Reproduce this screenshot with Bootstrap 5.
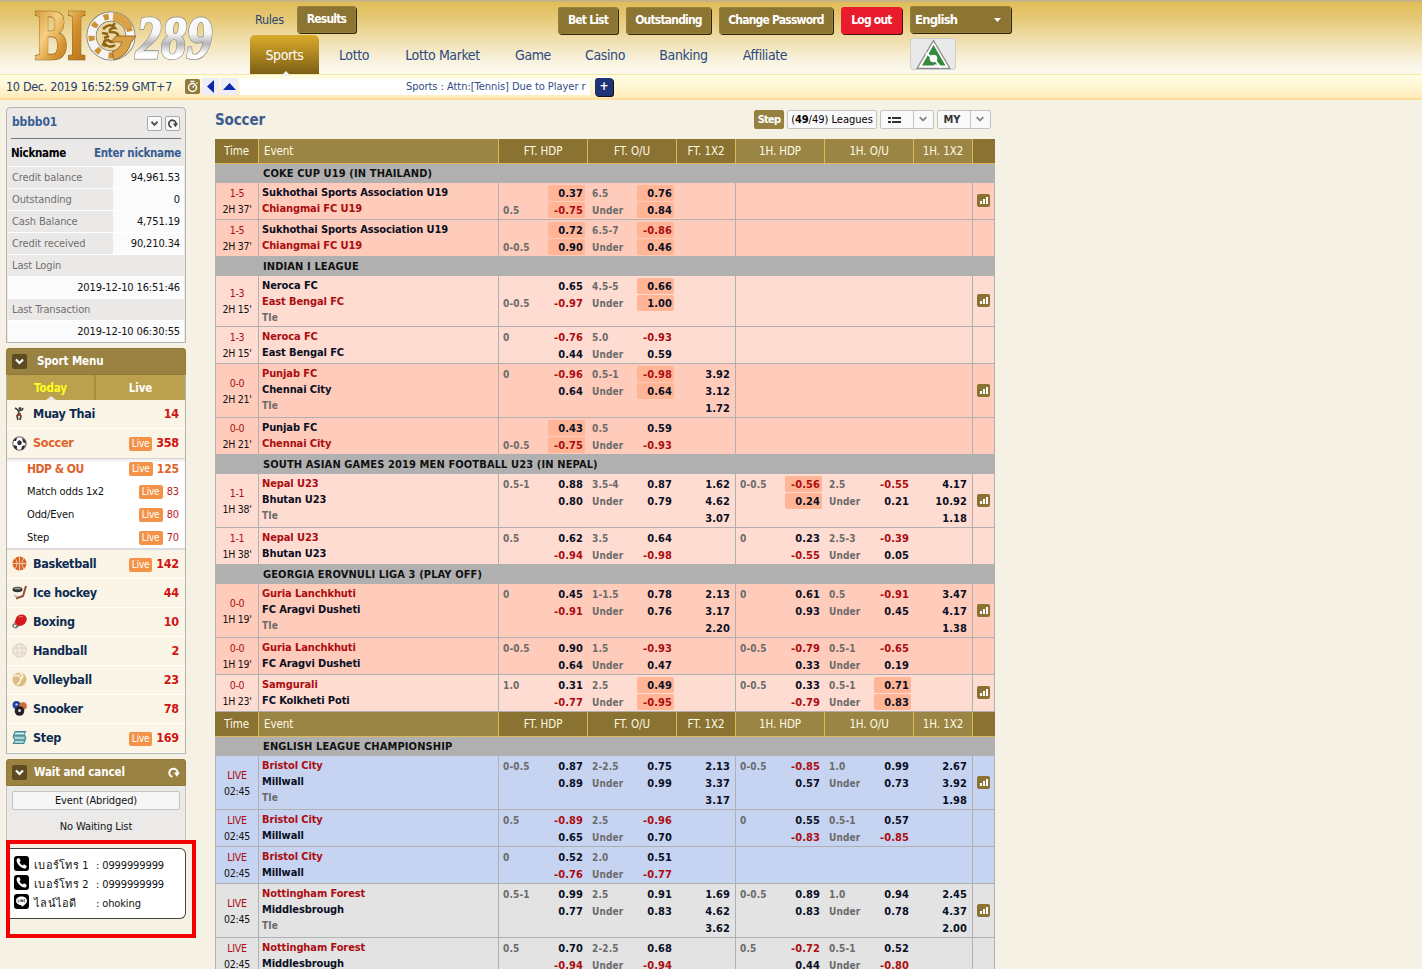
<!DOCTYPE html>
<html lang="en">
<head>
<meta charset="utf-8">
<title>BIG289</title>
<link href="https://cdn.jsdelivr.net/npm/bootstrap@5.3.0/dist/css/bootstrap.min.css" rel="stylesheet">
<style>
html,body{height:969px;overflow:hidden}
body{background:#f5f1e4;font-family:"DejaVu Sans Condensed","DejaVu Sans",Tahoma,sans-serif;font-size:11px;line-height:16px;color:#111;letter-spacing:-.12px}
b,.fw-bold{letter-spacing:-.12px}
a{text-decoration:none}
/* top bar */
.top-head{height:75px;background:linear-gradient(#e1bd58 0,#e5c772 20%,#efdda8 50%,#f8f1dc 80%,#fcfaf1);border-top:2px solid #c6b486;border-bottom:1px solid #f7e7a4}
.logo-box{width:250px;flex:none;padding:6px 0 0 32px}
.logo-box svg{overflow:visible}
.line-one{height:33px;padding-top:4px}
.gbtn{height:27px;line-height:27px;background:#8c7433;color:#fff;border-radius:3px;box-shadow:1px 1px 0 #2f2508,inset 0 0 0 1px #96803c;font-size:12px;font-weight:bold;text-align:center;letter-spacing:-.8px;white-space:nowrap}
.gbtn.red-one{background:#e81c2c;box-shadow:1px 1px 0 #4a1010}
.line-one .rule-link{color:#2b4470!important;font-size:12.5px;width:47px;line-height:27px;padding-left:5px;letter-spacing:-.3px}
.tabs a:not(.on){color:#2b4a80!important}
.tabs a{font-size:14px;text-align:center;line-height:40px;height:39px;display:block;letter-spacing:-.4px;white-space:nowrap}
.tabs a.on{background:linear-gradient(#d9ab2b,#a9821f 55%,#7c5f17);color:#fff!important;border-radius:5px 5px 0 0;position:relative;margin-right:2px}
.tabs a.on:after{content:"";position:absolute;left:31px;bottom:-2px;border:5px solid transparent;border-top:0;border-bottom-color:#eef0f5}
.flag{width:46px;height:32px;background:#e9e9e9;border:1px solid #cfcfcf;border-radius:3px;margin:3px 0 0 105px}
.news{height:25px;background:linear-gradient(#fffee4,#fff6d2 50%,#ffebbc);border-bottom:2px solid #fbdf9b}
.clock{width:185px;flex:none;padding-left:6px;font-size:12.5px;color:#24406e;line-height:25px;letter-spacing:-.33px;white-space:nowrap}
.ar{width:17px;height:17px;background:#eeeefa;margin-right:2px;display:block}
.tick{width:350px;height:16px;background:#fff;overflow:hidden;white-space:nowrap;color:#304c86;padding-left:166px;font-size:11px;letter-spacing:-.04px}
.plus{width:18px;height:18px;background:#1f3478;color:#fff;border-radius:3px;box-shadow:1px 1px 0 #111;margin-left:5px;line-height:16px;text-align:center;font-size:12px;font-weight:bold}
/* sidebar */
.side{width:180px;margin:7px 0 0 6px;flex:none}
.acct{height:236px;border:1px solid #b4b4b4;border-radius:4px 4px 0 0;background:#ebe9e8;padding:0 1px}
.sq{width:15px;height:15px;background:#f8f8f8;border:1px solid #a8a8a8;border-radius:2px;display:block}
.blue{color:#385d91}
.arow{height:22px;border-top:1px solid #fff}
.arow span{line-height:21px}
.arow .lbl{width:105px;padding-left:4px;color:#707070;background:#ebe9e8}
.arow .val{flex:1;text-align:right;padding-right:4px;background:#fbfbfb}
.phead{height:27px;background:#998242;color:#fff;border-radius:3px 3px 0 0;font-size:11.5px;font-weight:bold;line-height:25px;padding-left:5px;border:1px solid #8f7838}
.phead svg.dk{background:#5d4b22;border-radius:2px;width:15px;height:15px}
.mtabs{height:25px;background:#bba04d;color:#fff;font-weight:bold;line-height:26px;text-align:center;font-size:11.5px}
.mtabs div{width:50%}
.mtabs .on{color:#ffff1e;border-right:2px solid #a98e3c;position:relative}
.mtabs .on:after{content:"";position:absolute;left:39px;bottom:0;border:5px solid transparent;border-top:0;border-bottom:4px solid #e6e6ea}
.menu{border:1px solid #b4b4b4;border-top:0;background:#faf5e6}
.mi{height:29px;border-bottom:1px solid #fffefa;padding:0 6px 1px 5px;font-size:12.5px;font-weight:bold;color:#0d2a52;letter-spacing:-.3px}
.mi svg{width:15px;height:15px;margin-right:6px;flex:none}
.mi i,.smi i{margin-left:auto;font-style:normal}
.mi em{font-style:normal;color:#cf1414;letter-spacing:-.2px}
.live{background:#f49348;color:#fff;font-size:10px;font-weight:normal;border-radius:2px;width:23px;height:14px;line-height:14px;text-align:center;margin-right:4px;margin-top:2px;letter-spacing:-.2px}
.org{color:#e0622a!important}
.sub-list{background:#fff;border-top:1px solid #d5d5d8;border-bottom:2px solid #dcdce0;height:92px;box-shadow:inset 0 2px 2px #eee}
.smi{height:23px;padding:0 6px 0 20px;position:relative;top:-2px}
.smi em{font-style:normal;color:#c0201c}
.smi .live{width:24px;height:14px;line-height:14px;margin-top:1px}
.wait{height:54px;background:#ebeae9;border:1px solid #c4c4c4;border-top:0;border-bottom:0;padding:5px;text-align:center}
.evb{height:19px;line-height:17px;background:#f6f6f6;border:1px solid #c4c4c4;border-radius:2px;margin-bottom:9px}
.redbox{width:190px;height:98px;border:4px solid #f40000;padding-top:4px}
.contact{width:176px;height:71px;background:#fff;border:1px solid #484444;border-left:0;border-radius:0 6px 6px 0;padding:6px 0 0 4px}
.contact>div{height:19px;line-height:21px}
.contact svg{width:15px;height:15px;flex:none;margin:1px 5px 0 0}
.contact .cl{width:62px;letter-spacing:.25px}
/* odds */
.main-col{width:780px;margin:0 0 0 29px}
.bar-top{height:39px;padding:10px 4px 0 0}
.ttl{font-size:15px;font-weight:bold;color:#3b5c8e;line-height:20px;letter-spacing:-.15px}
.tb{height:19px;line-height:18px;background:#f9f9f9;border:1px solid #c3c3c3;border-radius:2px;white-space:nowrap;text-align:center}
.tb.g{background:#96803f;border-color:#96803f;color:#fff;font-weight:bold;letter-spacing:-.8px;width:30px;font-size:11px}
.tb .cut{border-left:1px solid #c3c3c3;width:20px;height:17px}
table.odds{width:780px;table-layout:fixed;border-collapse:separate;border-spacing:0}
.odds th{height:25px;background:#8a7232;color:#fffbe4;font-weight:normal;font-size:11.5px;text-align:center;border-right:1px solid #ddb95a;border-bottom:1px solid #ddb95a;padding:0;letter-spacing:-.1px}
.odds th.lt{background:#9b8545}
.odds th:last-child{border-right:0}
.odds .lg td{height:19px;background:#b0b0b0;padding:0 0 0 48px;font-weight:bold;line-height:19px;letter-spacing:.12px}
.odds .mt td{border-bottom:1px solid #b0b0b0;padding:0;vertical-align:top;background:var(--c);overflow:hidden}
.odds .mt td.ln{border-right:1px solid #b0b0b0}
.odds .mt td.tm{border-left:1px solid #b0b0b0;text-align:center;vertical-align:middle;font-size:10.5px;letter-spacing:-.25px}
.odds td.ev{padding:2px 0 0 3px!important;font-weight:bold;color:#0a0f24;letter-spacing:-.1px}
.odds .r{color:#ab0d10!important}
.odds .gy{color:#6b6b6b;font-size:10px;letter-spacing:.1px}
.od{padding:2px 3px 0 4px;height:100%}
.od div{height:17px;display:flex;justify-content:space-between;font-weight:bold;line-height:17px}
.od div span:first-child{color:#6b6b6b;font-size:10px;letter-spacing:.15px}
.od div b{width:37px;height:16px;text-align:right;padding-right:2px;color:#0a0f24;border-radius:2px;line-height:17px;letter-spacing:.1px}
.od div b.h{background:#ffb596}
.ox{padding:2px 5px 0 0;text-align:right;font-weight:bold;color:#0a0f24;line-height:17px;letter-spacing:.1px}
.c1{--c:#ffcbba}.c2{--c:#ffdcd1}.c3{--c:#c6d4f1}.c4{--c:#e3e3e3}
.odds .mt .ic{vertical-align:middle;text-align:center;line-height:0;border-right:1px solid #b0b0b0;padding-bottom:1px}
</style>
</head>
<body>
<svg width="0" height="0" class="d-none">
<symbol id="chart" viewBox="0 0 13 13"><rect width="13" height="13" rx="2" fill="#8a7232"/><path d="M3 7h2v3H3zM6 5h2v5H6zM9 3h2v7H9z" fill="#fff"/></symbol>
<symbol id="chev" viewBox="0 0 15 15"><path d="M4 5.500l3.500 3.500L11 5.500" fill="none" stroke="currentColor" stroke-width="2.200"/></symbol>
<symbol id="reload" viewBox="0 0 15 15"><path d="M6.500 11.800A4.100 4.100 0 1 1 11.400 8.600" fill="none" stroke="currentColor" stroke-width="2"/><path d="M8 7.600h6l-3.200 4.200z" fill="currentColor"/></symbol>
<symbol id="phone" viewBox="0 0 15 15"><rect width="15" height="15" rx="3"/><path d="M3.400 2.600l1.800-.6 1.500 2.900-1.200 1.200c.5 1.500 1.600 2.600 3.200 3.300l1.300-1.200 2.800 1.700-.8 2c-1 .8-2.500.6-4-.2C5.500 10.400 3.400 8 2.700 5.500c-.2-1.200 0-2.200.7-2.900z" fill="#fff"/></symbol>
</svg>

<header class="top-head d-flex">
  <div class="logo-box">
    <svg width="186" height="58" viewBox="0 0 186 58">
      <defs>
        <linearGradient id="au" x1="0" y1="0" x2="1" y2="1"><stop offset="0" stop-color="#c9861f"/><stop offset=".35" stop-color="#f6cf80"/><stop offset=".6" stop-color="#d2902f"/><stop offset="1" stop-color="#b06c14"/></linearGradient>
        <linearGradient id="ag" x1="0" y1="0" x2="0" y2="1"><stop offset="0" stop-color="#fff"/><stop offset=".45" stop-color="#f6f6f6"/><stop offset=".6" stop-color="#b5b5b5"/><stop offset=".75" stop-color="#fff"/></linearGradient>
      </defs>
      <text x="3" y="51" font-family="Liberation Serif" font-weight="bold" font-size="71" textLength="51" lengthAdjust="spacingAndGlyphs" letter-spacing="0" fill="#8d5a18" stroke="#8d5a18" stroke-width="2.600">BI</text>
      <text x="3" y="51" font-family="Liberation Serif" font-weight="bold" font-size="71" textLength="51" lengthAdjust="spacingAndGlyphs" letter-spacing="0" fill="url(#au)" stroke="url(#au)" stroke-width="1.300">BI</text>
      <circle cx="79" cy="28" r="19.500" fill="#ecd9a2" stroke="#777" stroke-width="10"/>
      <circle cx="79" cy="28" r="19.500" fill="none" stroke="#f5f5f5" stroke-width="8.500"/>
      <circle cx="79" cy="28" r="19.500" fill="none" stroke="#cf9233" stroke-width="6" stroke-dasharray="5 9"/>
      <path d="M81 8.500A19.500 19.500 0 0 1 97 20" fill="none" stroke="#dba246" stroke-width="8.500"/>
      <path d="M71 21q7-7 12-1-6 0-5 4 11 0 7 7-5 5-9 1-4 0-4 3 5 6 11 2M70 25l6 1M72 30l5-2M80 19l3-4M74 38l-4-2" fill="none" stroke="#8f6415" stroke-width="2.600"/>
      <path d="M84 28h20l-5 6q-3 14-17 18l-2-8q8-3 10-10h-11z" fill="#d9a145" stroke="#8d5a18" stroke-width=".8"/>
      <text x="104" y="50" font-family="Liberation Serif" font-weight="bold" font-style="italic" font-size="62" textLength="76" lengthAdjust="spacingAndGlyphs" letter-spacing="0" fill="#888" stroke="#8a8a8a" stroke-width="3">289</text>
      <text x="104" y="50" font-family="Liberation Serif" font-weight="bold" font-style="italic" font-size="62" textLength="76" lengthAdjust="spacingAndGlyphs" letter-spacing="0" fill="url(#ag)" stroke="url(#ag)" stroke-width="1.600">289</text>
    </svg>
  </div>
  <div>
    <div class="line-one d-flex">
      <a class="rule-link">Rules</a>
      <div class="gbtn" style="width:59px">Results</div>
      <div class="d-flex" style="margin:1px 0 0 202px;gap:8px">
        <div class="gbtn" style="width:60px">Bet List</div>
        <div class="gbtn" style="width:85px">Outstanding</div>
        <div class="gbtn" style="width:114px">Change Password</div>
        <div class="gbtn red-one" style="width:61px">Log out</div>
      </div>
      <div class="gbtn d-flex justify-content-between align-items-center" style="width:101px;margin-left:8px;padding:0 10px 0 5px;font-size:13px"><span>English</span><svg width="7" height="4"><path d="M0 0h7L3.500 4z" fill="#fff"/></svg></div>
    </div>
    <nav class="tabs d-flex">
      <a class="on" style="width:69px">Sports</a><a style="width:66px">Lotto</a><a style="width:111px">Lotto Market</a><a style="width:70px">Game</a><a style="width:74px">Casino</a><a style="width:83px">Banking</a><a style="width:80px">Affiliate</a>
      <div class="flag"><svg width="44" height="30" class="d-block"><path d="M22.500 1.500L39 29.500H6z" fill="#fff" stroke="#8b8b8b" stroke-width="1.300"/><path d="M22.500 6l12 20.500H11z" fill="#358a3b"/><circle cx="22.500" cy="19.500" r="3.800" fill="#fff"/><path d="M24 21l6 8M15 14l5 4M23 26.500h5" stroke="#fff" stroke-width="2"/></svg></div>
    </nav>
  </div>
</header>
<div class="news d-flex align-items-center">
  <div class="clock">10 Dec. 2019 16:52:59 GMT+7</div>
  <svg width="15" height="15" style="margin-right:2px"><rect width="15" height="15" rx="2" fill="#907a3e"/><circle cx="7.500" cy="8.500" r="4" fill="none" stroke="#fff" stroke-width="1.500"/><path d="M5.500 2.500h4M7.500 8.500l2-2M11.500 3.500l1 1" stroke="#fff" stroke-width="1.300"/></svg>
  <svg class="ar" viewBox="0 0 17 17"><path d="M12 2v13L5 8.500z" fill="#0a2aa6"/></svg>
  <svg class="ar" viewBox="0 0 17 17"><path d="M2 12h13L8.500 5z" fill="#0a2aa6"/></svg>
  <div class="tick">Sports : Attn:[Tennis] Due to Player r</div>
  <div class="plus">+</div>
</div>

<div class="d-flex align-items-start">
<aside class="side">
  <section class="acct">
    <div class="d-flex align-items-center fw-bold blue" style="height:30px;padding:0 4px 0 4px;font-size:12px"><span class="me-auto" style="line-height:28px;padding-bottom:2px">bbbb01</span><svg class="sq" style="margin-right:3px;color:#555"><use href="#chev" width="13" height="13"/></svg><svg class="sq" style="color:#444"><use href="#reload" width="13" height="13"/></svg></div>
    <div style="border-top:1px solid #777;margin:0 3px"></div>
    <div class="d-flex justify-content-between fw-bold" style="height:27px;line-height:29px;padding:0 3px 0 3px;font-size:11.500px;letter-spacing:-.3px"><span class="text-black">Nickname</span><span class="blue">Enter nickname</span></div>
    <div class="arow d-flex"><span class="lbl">Credit balance</span><span class="val">94,961.53</span></div>
    <div class="arow d-flex"><span class="lbl">Outstanding</span><span class="val">0</span></div>
    <div class="arow d-flex"><span class="lbl">Cash Balance</span><span class="val">4,751.19</span></div>
    <div class="arow d-flex"><span class="lbl">Credit received</span><span class="val">90,210.34</span></div>
    <div class="arow d-flex"><span class="lbl">Last Login</span></div>
    <div class="arow d-flex"><span class="val">2019-12-10 16:51:46</span></div>
    <div class="arow d-flex"><span class="lbl">Last Transaction</span></div>
    <div class="arow d-flex"><span class="val">2019-12-10 06:30:55</span></div>
  </section>

  <section style="margin-top:5px">
    <div class="phead d-flex align-items-center"><svg class="dk"><use href="#chev" width="15" height="15"/></svg><span style="margin-left:10px">Sport Menu</span></div>
    <div class="menu">
      <div class="mtabs d-flex"><div class="on">Today</div><div>Live</div></div>
      <div class="mi d-flex align-items-center"><svg viewBox="0 0 15 15"><path d="M3 2l3 2 1 3-2 3 1 4M6 5l4-1 1-2M7 8l2 2-1 4" fill="none" stroke="#444" stroke-width="1.700"/><circle cx="8" cy="2.500" r="1.500" fill="#444"/><path d="M6 8l3-1v3H6z" fill="#b3362e"/></svg>Muay Thai<i></i><em>14</em></div>
      <div class="mi d-flex align-items-center border-0"><svg viewBox="0 0 15 15"><circle cx="7.500" cy="7.500" r="6.700" fill="#fff" stroke="#555"/><path d="M5 6l2.500-2L10 6l-1 3H6zM1 5l2-3 2 0-1 3zM10 2l3 2 1 4-3-2zM2 9l3 1 0 4-3-2zM10 10l3-1-1 4-3 1z" fill="#333"/></svg><span class="org">Soccer</span><i class="live">Live</i><em>358</em></div>
      <div class="sub-list">
        <div class="smi d-flex align-items-center fw-bold" style="font-size:12px"><span class="org" style="letter-spacing:-.5px">HDP &amp; OU</span><i class="live">Live</i><em class="org">125</em></div>
        <div class="smi d-flex align-items-center">Match odds 1x2<i class="live">Live</i><em>83</em></div>
        <div class="smi d-flex align-items-center">Odd/Even<i class="live">Live</i><em>80</em></div>
        <div class="smi d-flex align-items-center">Step<i class="live">Live</i><em>70</em></div>
      </div>
      <div class="mi d-flex align-items-center"><svg viewBox="0 0 15 15"><circle cx="7.500" cy="7.500" r="7" fill="#d9652c"/><path d="M7.500.5v14M.5 7.500h14M3 2q4 5.500 0 11M12 2q-4 5.500 0 11" fill="none" stroke="#f6c9a4"/></svg>Basketball<i class="live">Live</i><em>142</em></div>
      <div class="mi d-flex align-items-center"><svg viewBox="0 0 15 15"><ellipse cx="5.500" cy="4.500" rx="5" ry="2.800" fill="#333"/><ellipse cx="5.500" cy="3.500" rx="3.500" ry="1" fill="#999"/><path d="M14 1l-3 10-7 2.500" fill="none" stroke="#9a4a35" stroke-width="2"/><path d="M1 9l5 2-2 2z" fill="#bbb"/></svg>Ice hockey<i></i><em>44</em></div>
      <div class="mi d-flex align-items-center"><svg viewBox="0 0 15 15"><path d="M4.500 3q4-4 8.500-1.500 3.500 3.500 0 8-3 3-7 2.500L2.500 8.500z" fill="#d51a1d"/><path d="M2.500 8.500l4.500 4-3 2q-3 0-4-3z" fill="#777"/><circle cx="3" cy="12" r="1.200" fill="#eee"/><path d="M7 3q3-1 4 0" stroke="#f58a85" fill="none"/></svg>Boxing<i></i><em>10</em></div>
      <div class="mi d-flex align-items-center"><svg viewBox="0 0 15 15"><circle cx="7.500" cy="7.500" r="6.800" fill="#f3ebdf" stroke="#dccfbf"/><path d="M5 1v13M10 1v13M1 5h13M1 10h13" stroke="#dccfbf" stroke-width=".8"/></svg>Handball<i></i><em>2</em></div>
      <div class="mi d-flex align-items-center"><svg viewBox="0 0 15 15"><circle cx="7.500" cy="7.500" r="7" fill="#dcbc83"/><path d="M2 4q6-2 7 3-1 4-4 6M8 1q5 3 1 6" fill="none" stroke="#fff3d8" stroke-width="1.500"/></svg>Volleyball<i></i><em>23</em></div>
      <div class="mi d-flex align-items-center"><svg viewBox="0 0 15 15"><circle cx="4.500" cy="4" r="4" fill="#2745a0"/><circle cx="11" cy="5" r="3.800" fill="#d2693c"/><circle cx="7.500" cy="10" r="4.800" fill="#222"/><circle cx="7.500" cy="9.500" r="1.500" fill="#ddd"/><circle cx="4.500" cy="3.500" r="1.100" fill="#dde"/></svg>Snooker<i></i><em>78</em></div>
      <div class="mi d-flex align-items-center"><svg viewBox="0 0 15 15"><path d="M3 1.500h11l-2 2.500 2 3.500-2 6H1l2-3-2-3.500z" fill="#7fb8c0" stroke="#3f8791"/><path d="M3 3.500h9M3 8h9M3 12h8" stroke="#d9f0f2" stroke-width="1.200"/><path d="M2 5.800h11M2 10h11" stroke="#3f8791"/></svg>Step<i class="live">Live</i><em>169</em></div>
    </div>
  </section>

  <section style="margin-top:5px">
    <div class="phead d-flex align-items-center"><svg class="dk"><use href="#chev" width="15" height="15"/></svg><span class="me-auto" style="margin-left:7px">Wait and cancel</span><svg width="15" height="15" style="margin-right:4px"><use href="#reload" width="15" height="15"/></svg></div>
    <div class="wait"><div class="evb">Event (Abridged)</div>No Waiting List</div>
  </section>
  <div class="redbox">
    <div class="contact">
      <div class="d-flex"><svg><use href="#phone"/></svg><span class="cl">เบอร์โทร 1</span><span>: 0999999999</span></div>
      <div class="d-flex"><svg><use href="#phone"/></svg><span class="cl">เบอร์โทร 2</span><span>: 0999999999</span></div>
      <div class="d-flex"><svg viewBox="0 0 15 15"><rect width="15" height="15" rx="3"/><path d="M7.500 2.500c3.200 0 5.500 1.900 5.500 4.300 0 2.600-3 4.600-5.300 6.200l-.2-1.800C4.300 11 2 9.200 2 6.800s2.300-4.300 5.500-4.300z" fill="#fff"/><path d="M4 5.500v2.300h1.300M6.300 5.500v2.300M7.500 7.900V5.600l1.300 2.200V5.500M11.200 5.600h-1.100v2.200h1.100" fill="none" stroke="#000" stroke-width=".6"/></svg><span class="cl">ไลน์ไอดี</span><span>: ohoking</span></div>
    </div>
  </div>
</aside>

<main class="main-col">
  <div class="bar-top d-flex">
    <span class="ttl me-auto">Soccer</span>
    <span class="tb g" style="margin-right:3px">Step</span>
    <span class="tb text-black" style="width:90px;margin-right:3px;letter-spacing:0">(<b>49</b>/49) Leagues</span>
    <span class="tb d-flex" style="width:54px;margin-right:3px"><svg width="32" height="17"><path d="M7 6h3v2H7zM7 10h3v2H7zM11 6h9v2h-9zM11 10h9v2h-9z" fill="#333"/></svg><svg class="cut" viewBox="0 0 20 17"><path d="M6 6l3.500 3.500L13 6" fill="none" stroke="#888" stroke-width="2"/></svg></span>
    <span class="tb d-flex" style="width:54px"><b style="width:32px;padding-right:4px;color:#333">MY</b><svg class="cut" viewBox="0 0 20 17"><path d="M6 6l3.500 3.500L13 6" fill="none" stroke="#888" stroke-width="2"/></svg></span>
  </div>
  <table class="odds">
    <colgroup><col style="width:44px"><col style="width:240px"><col style="width:89px"><col style="width:89px"><col style="width:59px"><col style="width:89px"><col style="width:89px"><col style="width:59px"><col style="width:22px"></colgroup>
    <tbody id="rows"></tbody>
  </table>
</main>
</div>

<script>
// A price starting with "*" is highlighted, a negative price is red.
const HEAD = 'H';
const data = [
 HEAD,
 'COKE CUP U19 (IN THAILAND)',
 [1,37,'1-5',"2H 37'",'Sukhothai Sports Association U19','Chiangmai FC U19',2,0,[' ','*0.37','0.5','*-0.75'],['6.5','*0.76','Under','*0.84'],0,0,0,0,1],
 [1,37,'1-5',"2H 37'",'Sukhothai Sports Association U19','Chiangmai FC U19',2,0,[' ','*0.72','0-0.5','*0.90'],['6.5-7','*-0.86','Under','*0.46'],0,0,0,0,0],
 'INDIAN I LEAGUE',
 [2,51,'1-3',"2H 15'",'Neroca FC','East Bengal FC',2,1,[' ','0.65','0-0.5','-0.97'],['4.5-5','*0.66','Under','*1.00'],0,0,0,0,1],
 [2,37,'1-3',"2H 15'",'Neroca FC','East Bengal FC',1,0,['0','-0.76',' ','0.44'],['5.0','-0.93','Under','0.59'],0,0,0,0,0],
 [1,54,'0-0',"2H 21'",'Punjab FC','Chennai City',1,1,['0','-0.96',' ','0.64'],['0.5-1','*-0.98','Under','*0.64'],['3.92','3.12','1.72'],0,0,0,1],
 [1,37,'0-0',"2H 21'",'Punjab FC','Chennai City',2,0,[' ','*0.43','0-0.5','*-0.75'],['0.5','0.59','Under','-0.93'],0,0,0,0,0],
 'SOUTH ASIAN GAMES 2019 MEN FOOTBALL U23 (IN NEPAL)',
 [2,54,'1-1',"1H 38'",'Nepal U23','Bhutan U23',1,1,['0.5-1','0.88',' ','0.80'],['3.5-4','0.87','Under','0.79'],['1.62','4.62','3.07'],['0-0.5','*-0.56',' ','*0.24'],['2.5','-0.55','Under','0.21'],['4.17','10.92','1.18'],1],
 [2,37,'1-1',"1H 38'",'Nepal U23','Bhutan U23',1,0,['0.5','0.62',' ','-0.94'],['3.5','0.64','Under','-0.98'],0,['0','0.23',' ','-0.55'],['2.5-3','-0.39','Under','0.05'],0,0],
 'GEORGIA EROVNULI LIGA 3 (PLAY OFF)',
 [1,54,'0-0',"1H 19'",'Guria Lanchkhuti','FC Aragvi Dusheti',1,1,['0','0.45',' ','-0.91'],['1-1.5','0.78','Under','0.76'],['2.13','3.17','2.20'],['0','0.61',' ','0.93'],['0.5','-0.91','Under','0.45'],['3.47','4.17','1.38'],1],
 [1,37,'0-0',"1H 19'",'Guria Lanchkhuti','FC Aragvi Dusheti',1,0,['0-0.5','0.90',' ','0.64'],['1.5','-0.93','Under','0.47'],0,['0-0.5','-0.79',' ','0.33'],['0.5-1','-0.65','Under','0.19'],0,0],
 [2,37,'0-0',"1H 23'",'Samgurali','FC Kolkheti Poti',1,0,['1.0','0.31',' ','-0.77'],['2.5','*0.49','Under','*-0.95'],0,['0-0.5','0.33',' ','-0.79'],['0.5-1','*0.71','Under','*0.83'],0,1],
 HEAD,
 'ENGLISH LEAGUE CHAMPIONSHIP',
 [3,54,'LIVE','02:45','Bristol City','Millwall',1,1,['0-0.5','0.87',' ','0.89'],['2-2.5','0.75','Under','0.99'],['2.13','3.37','3.17'],['0-0.5','-0.85',' ','0.57'],['1.0','0.99','Under','0.73'],['2.67','3.92','1.98'],1],
 [3,37,'LIVE','02:45','Bristol City','Millwall',1,0,['0.5','-0.89',' ','0.65'],['2.5','-0.96','Under','0.70'],0,['0','0.55',' ','-0.83'],['0.5-1','0.57','Under','-0.85'],0,0],
 [3,37,'LIVE','02:45','Bristol City','Millwall',1,0,['0','0.52',' ','-0.76'],['2.0','0.51','Under','-0.77'],0,0,0,0,0],
 [4,54,'LIVE','02:45','Nottingham Forest','Middlesbrough',1,1,['0.5-1','0.99',' ','0.77'],['2.5','0.91','Under','0.83'],['1.69','4.62','3.62'],['0-0.5','0.89',' ','0.83'],['1.0','0.94','Under','0.78'],['2.45','4.37','2.00'],1],
 [4,37,'LIVE','02:45','Nottingham Forest','Middlesbrough',1,0,['0.5','0.70',' ','-0.94'],['2-2.5','0.68','Under','-0.94'],0,['0.5','-0.72',' ','0.44'],['0.5-1','0.52','Under','-0.80'],0,0]
];
const price = v => {
  const hot = v[0] === '*', t = hot ? v.slice(1) : v;
  return `<b class="${hot ? 'h ' : ''}${t[0] === '-' ? 'r' : ''}">${t}</b>`;
};
const pair = c => c ? `<div class="od"><div><span>${c[0]}</span>${price(c[1])}</div><div><span>${c[2]}</span>${price(c[3])}</div></div>` : '';
const three = c => c ? `<div class="ox">${c.join('<br>')}</div>` : '';
document.getElementById('rows').innerHTML = data.map(d => {
  if (d === HEAD) return '<tr><th>Time</th><th class="lt" style="text-align:left;padding-left:5px">Event</th><th>FT. HDP</th><th>FT. O/U</th><th>FT. 1X2</th><th class="lt">1H. HDP</th><th class="lt">1H. O/U</th><th class="lt">1H. 1X2</th><th></th></tr>';
  if (typeof d === 'string') return `<tr class="lg"><td colspan="9">${d}</td></tr>`;
  const [c,h,s,t,a,b,red,tie,fh,fo,fx,hh,ho,hx,ic] = d;
  return `<tr class="mt c${c}" style="height:${h}px"><td class="tm ln"><span class="r">${s}</span><br>${t}</td>
  <td class="ev ln"><span class="${red===1?'r':''}">${a}</span><br><span class="${red===2?'r':''}">${b}</span>${tie?'<br><span class="gy">TIe</span>':''}</td>
  <td>${pair(fh)}</td><td>${pair(fo)}</td><td class="ln">${three(fx)}</td><td>${pair(hh)}</td><td>${pair(ho)}</td><td class="ln">${three(hx)}</td>
  <td class="ic">${ic?'<svg width="13" height="13"><use href="#chart"/></svg>':''}</td></tr>`;
}).join('');
</script>
<script src="https://cdn.jsdelivr.net/npm/bootstrap@5.3.0/dist/js/bootstrap.bundle.min.js"></script>
</body>
</html>
